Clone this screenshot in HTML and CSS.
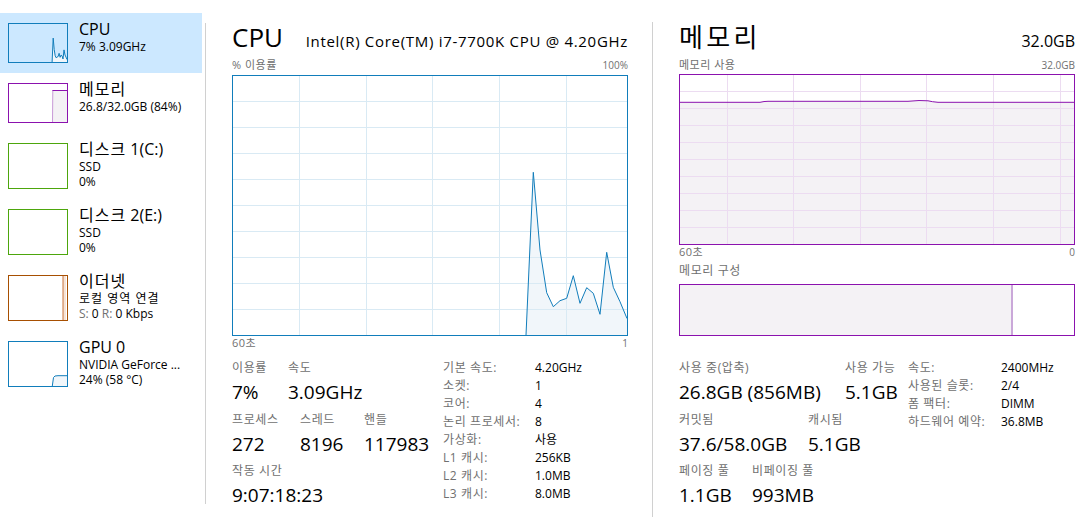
FILE: index.html
```html
<!DOCTYPE html>
<html lang="ko">
<head>
<meta charset="utf-8">
<title>작업 관리자 - 성능</title>
<link rel="stylesheet" href="styles.css">
</head>
<body>
<div class="app">
  <nav class="sidebar">
    <div class="item selected">
      <svg class="thumb" width="60" height="40" viewBox="0 0 60 40">
        <polygon class="cpu-fill" points="44.1,39 45.2,15.1 46.2,26.5 47.2,32.8 48.2,34.8 49.1,34 50.1,33.6 51.1,30.3 52.1,34.3 53.1,32.1 54,32.9 55,36 56,26.9 57,32 58,34.1 59,36.5 59,39"/>
        <polyline class="cpu-line" points="44.1,39 45.2,15.1 46.2,26.5 47.2,32.8 48.2,34.8 49.1,34 50.1,33.6 51.1,30.3 52.1,34.3 53.1,32.1 54,32.9 55,36 56,26.9 57,32 58,34.1 59,36.5"/>
        <rect class="cpu-border" x="0.5" y="0.5" width="59" height="39"/>
      </svg>
      <div class="itext">
        <div class="ititle">CPU</div>
        <div class="isub">7% 3.09GHz</div>
      </div>
    </div>
    <div class="item">
      <svg class="thumb" width="60" height="40" viewBox="0 0 60 40">
        <polygon class="mem-fill" points="44,39 45,7 59,7 59,39"/>
        <line class="mem-edge" x1="44.5" y1="39" x2="44.8" y2="7"/>
        <line class="mem-line" x1="44.5" y1="7.5" x2="59" y2="7.5"/>
        <rect class="mem-border" x="0.5" y="0.5" width="59" height="39"/>
      </svg>
      <div class="itext">
        <div class="ititle"><span class="ko">메모리</span></div>
        <div class="isub">26.8/32.0GB (84%)</div>
      </div>
    </div>
    <div class="item tall">
      <svg class="thumb" width="60" height="46" viewBox="0 0 60 46">
        <rect class="disk-border" x="0.5" y="0.5" width="59" height="45"/>
      </svg>
      <div class="itext">
        <div class="ititle"><span class="ko">디스크</span> 1(C:)</div>
        <div class="isub">SSD</div>
        <div class="isub">0%</div>
      </div>
    </div>
    <div class="item tall">
      <svg class="thumb" width="60" height="46" viewBox="0 0 60 46">
        <rect class="disk-border" x="0.5" y="0.5" width="59" height="45"/>
      </svg>
      <div class="itext">
        <div class="ititle"><span class="ko">디스크</span> 2(E:)</div>
        <div class="isub">SSD</div>
        <div class="isub">0%</div>
      </div>
    </div>
    <div class="item tall">
      <svg class="thumb" width="60" height="46" viewBox="0 0 60 46">
        <rect class="eth-fill" x="55" y="1" width="3" height="44"/>
        <line class="eth-line" x1="55" y1="1" x2="55" y2="45"/>
        <rect class="eth-border" x="0.5" y="0.5" width="59" height="45"/>
      </svg>
      <div class="itext">
        <div class="ititle"><span class="ko">이더넷</span></div>
        <div class="isub ko">로컬 영역 연결</div>
        <div class="isub"><span class="dim">S:</span> 0 <span class="dim">R:</span> 0 Kbps</div>
      </div>
    </div>
    <div class="item tall">
      <svg class="thumb" width="60" height="46" viewBox="0 0 60 46">
        <polygon class="cpu-fill" points="44.3,45 45.5,36.5 47,35 50,34.7 59,34.7 59,45"/>
        <polyline class="cpu-line" points="44.3,45 45.5,36.5 47,35 50,34.7 59,34.7"/>
        <rect class="cpu-border" x="0.5" y="0.5" width="59" height="45"/>
      </svg>
      <div class="itext">
        <div class="ititle">GPU 0</div>
        <div class="isub">NVIDIA GeForce ...</div>
        <div class="isub">24% (58 °C)</div>
      </div>
    </div>
  </nav>

  <div class="sep sep-left"></div>

  <main class="panel cpu">
    <div class="phead">
      <span class="ptitle">CPU</span>
      <span class="psub cpu-name">Intel(R) Core(TM) i7-7700K CPU @ 4.20GHz</span>
    </div>
    <div class="axis axis-top"><span class="axl">% 이용률</span><span>100%</span></div>
    <div class="chart chart-cpu">
      <svg width="394" height="259" viewBox="0 0 394 259">
        <polygon class="cpu-fill" points="293,259 300.3,96.3 307,174 313.7,216.7 320.3,230.7 327,224.7 333.7,222.3 340.3,199.7 347,227.3 353.7,211.7 360.3,217.3 367,238.3 373.7,176.3 380.3,211.3 387,225.7 394,242.5 394,259"/>
        <g class="cpu-grid">
          <line x1="66.5" y1="0" x2="66.5" y2="259"/>
          <line x1="133.5" y1="0" x2="133.5" y2="259"/>
          <line x1="199.5" y1="0" x2="199.5" y2="259"/>
          <line x1="266.5" y1="0" x2="266.5" y2="259"/>
          <line x1="333.5" y1="0" x2="333.5" y2="259"/>
          <line x1="0" y1="25.5" x2="394" y2="25.5"/>
          <line x1="0" y1="51.5" x2="394" y2="51.5"/>
          <line x1="0" y1="77.5" x2="394" y2="77.5"/>
          <line x1="0" y1="103.5" x2="394" y2="103.5"/>
          <line x1="0" y1="129.5" x2="394" y2="129.5"/>
          <line x1="0" y1="155.5" x2="394" y2="155.5"/>
          <line x1="0" y1="181.5" x2="394" y2="181.5"/>
          <line x1="0" y1="207.5" x2="394" y2="207.5"/>
          <line x1="0" y1="233.5" x2="394" y2="233.5"/>
        </g>
        <polyline class="cpu-line" points="293,259 300.3,96.3 307,174 313.7,216.7 320.3,230.7 327,224.7 333.7,222.3 340.3,199.7 347,227.3 353.7,211.7 360.3,217.3 367,238.3 373.7,176.3 380.3,211.3 387,225.7 394,242.5"/>
      </svg>
    </div>
    <div class="axis axis-bottom"><span class="axl">60초</span><span>1</span></div>

    <div class="stats cpu-stats">
      <div class="sleft cpu-left">
        <div class="srow">
          <div class="stat c-util"><div class="slabel">이용률</div><div class="sval">7%</div></div>
          <div class="stat"><div class="slabel">속도</div><div class="sval">3.09GHz</div></div>
        </div>
        <div class="srow">
          <div class="stat c-proc"><div class="slabel">프로세스</div><div class="sval">272</div></div>
          <div class="stat c-thr"><div class="slabel">스레드</div><div class="sval">8196</div></div>
          <div class="stat"><div class="slabel">핸들</div><div class="sval">117983</div></div>
        </div>
        <div class="srow">
          <div class="stat"><div class="slabel">작동 시간</div><div class="sval">9:07:18:23</div></div>
        </div>
      </div>
      <dl class="info cpu-info">
        <dt>기본 속도:</dt><dd>4.20GHz</dd>
        <dt>소켓:</dt><dd>1</dd>
        <dt>코어:</dt><dd>4</dd>
        <dt>논리 프로세서:</dt><dd>8</dd>
        <dt>가상화:</dt><dd>사용</dd>
        <dt>L1 캐시:</dt><dd>256KB</dd>
        <dt>L2 캐시:</dt><dd>1.0MB</dd>
        <dt>L3 캐시:</dt><dd>8.0MB</dd>
      </dl>
    </div>
  </main>

  <div class="sep sep-right"></div>

  <section class="panel mem">
    <div class="phead">
      <span class="ptitle ptitle-ko">메모리</span>
      <span class="psub mem-total">32.0GB</span>
    </div>
    <div class="axis axis-top mem-top"><span class="axl">메모리 사용</span><span>32.0GB</span></div>
    <div class="chart chart-mem">
      <svg width="394" height="169" viewBox="0 0 394 169">
        <path class="mem-fill" d="M0,27.3 L80,27.3 Q84,26.3 88,26.3 L228,26.3 Q240,25 248,25.8 Q252,26.8 258,27.3 L394,27.3 L394,169 L0,169 Z"/>
        <g class="mem-grid">
          <line x1="47.5" y1="0" x2="47.5" y2="169"/>
          <line x1="113.5" y1="0" x2="113.5" y2="169"/>
          <line x1="180.5" y1="0" x2="180.5" y2="169"/>
          <line x1="246.5" y1="0" x2="246.5" y2="169"/>
          <line x1="313.5" y1="0" x2="313.5" y2="169"/>
          <line x1="380.5" y1="0" x2="380.5" y2="169"/>
          <line x1="0" y1="16.5" x2="394" y2="16.5"/>
          <line x1="0" y1="33.5" x2="394" y2="33.5"/>
          <line x1="0" y1="50.5" x2="394" y2="50.5"/>
          <line x1="0" y1="67.5" x2="394" y2="67.5"/>
          <line x1="0" y1="84.5" x2="394" y2="84.5"/>
          <line x1="0" y1="101.5" x2="394" y2="101.5"/>
          <line x1="0" y1="118.5" x2="394" y2="118.5"/>
          <line x1="0" y1="135.5" x2="394" y2="135.5"/>
          <line x1="0" y1="152.5" x2="394" y2="152.5"/>
        </g>
        <path class="mem-line" d="M0,27.3 L80,27.3 Q84,26.3 88,26.3 L228,26.3 Q240,25 248,25.8 Q252,26.8 258,27.3 L394,27.3"/>
      </svg>
    </div>
    <div class="axis axis-bottom"><span class="axl">60초</span><span>0</span></div>
    <div class="comp-label">메모리 구성</div>
    <div class="comp">
      <div class="comp-used"></div>
      <div class="comp-mod"></div>
    </div>

    <div class="stats mem-stats">
      <div class="sleft mem-left">
        <div class="srow">
          <div class="stat m-use"><div class="slabel">사용 중(압축)</div><div class="sval">26.8GB (856MB)</div></div>
          <div class="stat"><div class="slabel">사용 가능</div><div class="sval">5.1GB</div></div>
        </div>
        <div class="srow">
          <div class="stat m-commit"><div class="slabel">커밋됨</div><div class="sval">37.6/58.0GB</div></div>
          <div class="stat"><div class="slabel">캐시됨</div><div class="sval">5.1GB</div></div>
        </div>
        <div class="srow">
          <div class="stat m-page"><div class="slabel">페이징 풀</div><div class="sval">1.1GB</div></div>
          <div class="stat"><div class="slabel">비페이징 풀</div><div class="sval">993MB</div></div>
        </div>
      </div>
      <dl class="info mem-info">
        <dt>속도:</dt><dd>2400MHz</dd>
        <dt>사용된 슬롯:</dt><dd>2/4</dd>
        <dt>폼 팩터:</dt><dd>DIMM</dd>
        <dt>하드웨어 예약:</dt><dd>36.8MB</dd>
      </dl>
    </div>
  </section>
</div>
</body>
</html>
```

FILE: styles.css
```css
* { box-sizing: border-box; }

html, body {
  margin: 0;
  padding: 0;
  background: #ffffff;
}

body {
  width: 1090px;
  height: 526px;
  overflow: hidden;
  font-family: "Open Sans", "Noto Sans CJK KR", sans-serif;
  color: #000000;
}

.app {
  display: flex;
  align-items: flex-start;
}

/* ---------- sidebar ---------- */
.sidebar {
  flex: none;
  width: 202px;
  padding-top: 13px;
}

.item {
  display: flex;
  align-items: flex-start;
  padding: 10px 0 10px 8px;
}

.item.selected { background: #cce8ff; }

.thumb { display: block; flex: none; }

.itext {
  margin-left: 11px;
  margin-top: -3px;
  white-space: nowrap;
}

.ititle {
  font-size: 16px;
  line-height: 19px;
}

.isub {
  font-size: 12px;
  line-height: 15px;
}

.ititle .ko { letter-spacing: 1px; }
.isub.ko { letter-spacing: 1px; }

.dim { color: #707070; }

/* svg colour classes */
.cpu-border { fill: none; stroke: #117dbb; stroke-width: 1; }
.cpu-fill { fill: #f1f6fa; stroke: none; }
.cpu-line { fill: none; stroke: #117dbb; stroke-width: 1; stroke-linejoin: round; }
.cpu-grid line { stroke: #d9eaf4; stroke-width: 1; }

.mem-border { fill: none; stroke: #8b12ae; stroke-width: 1; }
.mem-fill { fill: #f4f2f5; stroke: none; }
.mem-edge { stroke: #c99ad8; stroke-width: 1; }
.mem-line { fill: none; stroke: #8b12ae; stroke-width: 1; }
.mem-grid line { stroke: #ecdcf1; stroke-width: 1; }

.disk-border { fill: none; stroke: #4da60c; stroke-width: 1; }

.eth-border { fill: none; stroke: #a74f01; stroke-width: 1; }
.eth-fill { fill: #f6e3d6; }
.eth-line { stroke: #c8733a; stroke-width: 1; }

/* ---------- separators ---------- */
.sep {
  flex: none;
  width: 1px;
  background: #d0d0d0;
}

.sep-left {
  margin-left: 3px;
  margin-top: 23px;
  height: 481px;
}

.sep-right {
  margin-top: 22px;
  height: 495px;
}

/* ---------- panels ---------- */
.panel {
  flex: none;
  padding-left: 26px;
}

.panel.cpu { width: 446px; }
.panel.mem { width: 437px; }

.phead {
  display: flex;
  justify-content: space-between;
  align-items: baseline;
  width: 396px;
  height: 53px;
  padding-top: 21px;
  white-space: nowrap;
}

.ptitle {
  font-size: 26px;
  line-height: 32px;
}

.ptitle-ko { letter-spacing: 3.3px; }

.psub {
  font-size: 15px;
  line-height: 20px;
}

.cpu-name { letter-spacing: 0.7px; }

.mem-total { font-size: 16px; }

.axis {
  display: flex;
  justify-content: space-between;
  width: 396px;
  font-size: 10px;
  line-height: 14px;
  color: #707070;
  white-space: nowrap;
}

.axl {
  font-size: 11px;
  letter-spacing: 0.5px;
}

.axis-top {
  height: 22px;
  padding-top: 5px;
}

.axis-top.mem-top { height: 21px; }

.axis-bottom { height: 14px; }

.chart svg { display: block; }

.chart-cpu {
  width: 396px;
  height: 261px;
  border: 1px solid #117dbb;
}

.chart-mem {
  width: 396px;
  height: 171px;
  border: 1px solid #8b12ae;
}

.comp-label {
  margin-top: 4px;
  font-size: 12px;
  line-height: 16px;
  letter-spacing: 0.6px;
  color: #707070;
}

.comp {
  display: flex;
  margin-top: 5px;
  width: 396px;
  height: 52px;
  border: 1px solid #8b12ae;
}

.comp-used {
  width: 331px;
  background: #f4f2f5;
}

.comp-mod {
  width: 2px;
  background: #caa8d9;
}

/* ---------- stats ---------- */
.stats {
  display: flex;
  align-items: flex-start;
  white-space: nowrap;
}

.cpu-stats { margin-top: 10px; }
.mem-stats { margin-top: 24px; }

.sleft {
  display: flex;
  flex-direction: column;
  row-gap: 7.5px;
}

.cpu-left { width: 211px; }
.mem-left { width: 229px; }

.srow { display: flex; }

.slabel {
  font-size: 12px;
  line-height: 16px;
  letter-spacing: 0.6px;
  color: #707070;
}

.sval {
  margin-top: 4px;
  font-size: 19px;
  line-height: 24px;
}

.c-util { width: 56px; }
.c-proc { width: 68px; }
.c-thr { width: 64px; }

.m-use { width: 166px; }
.m-commit { width: 129px; }
.m-page { width: 73px; }

.info {
  display: grid;
  margin: -1px 0 0 0;
  font-size: 12px;
  line-height: 18px;
}

.cpu-info { grid-template-columns: 92px auto; }
.mem-info { grid-template-columns: 93px auto; }

.info dt {
  color: #707070;
  letter-spacing: 0.6px;
}

.info dd { margin: 0; color: #000000; }
```
